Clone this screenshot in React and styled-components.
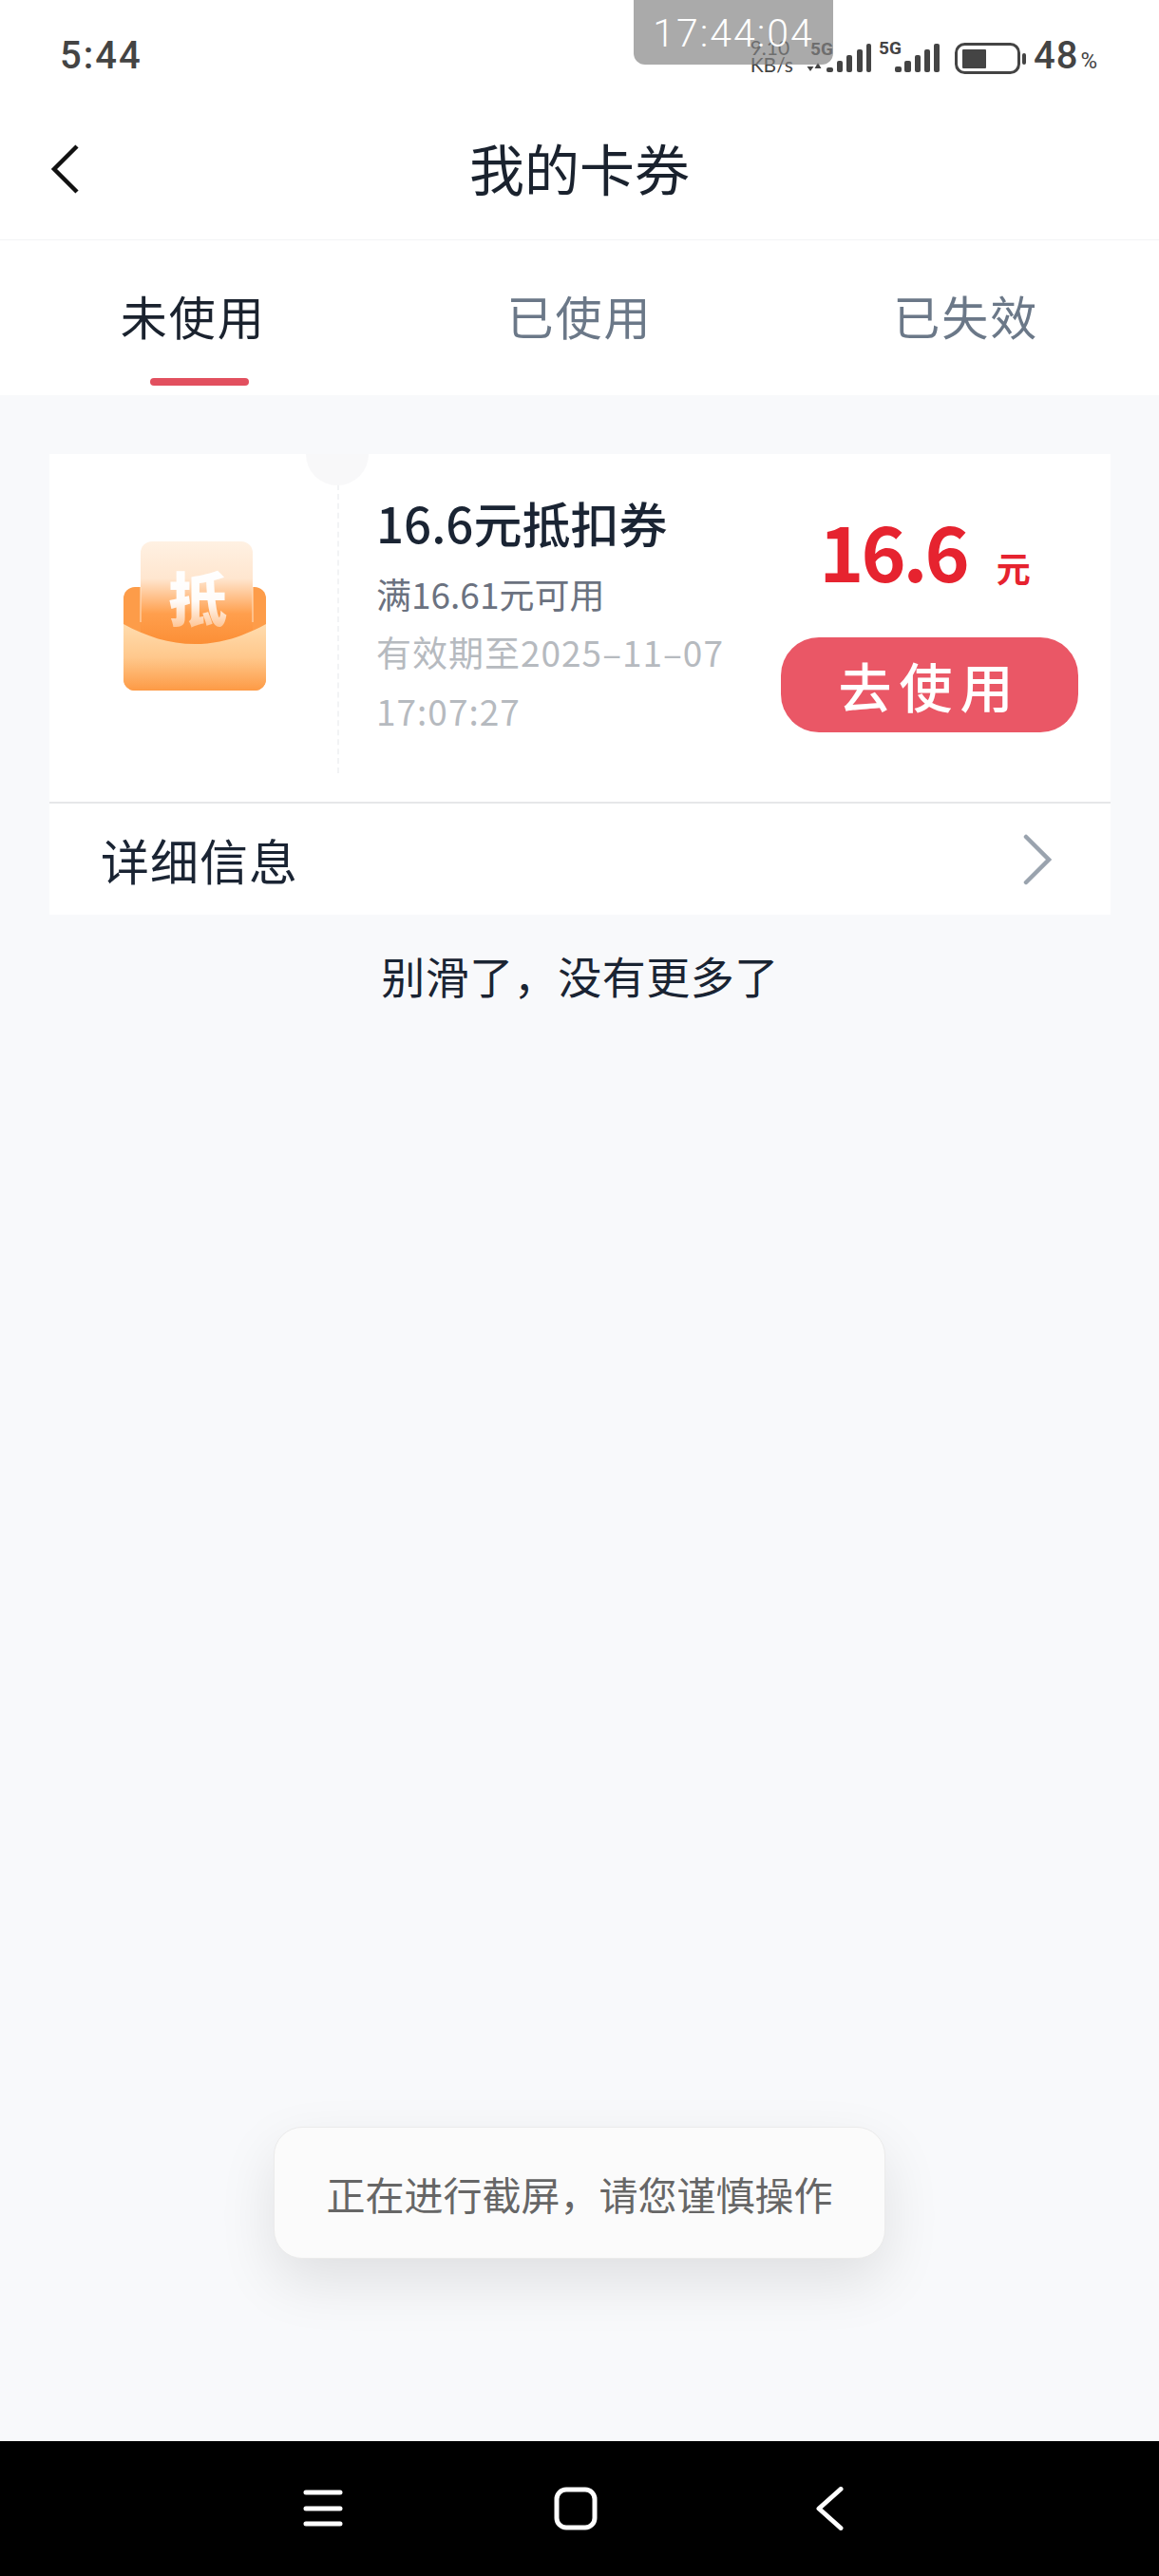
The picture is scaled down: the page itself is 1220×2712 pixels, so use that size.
import styled, { createGlobalStyle } from "styled-components";

const cjk = `"Noto Sans CJK SC", "Noto Sans", sans-serif`;

function SignalOne() {
  return (
    <svg width="68" height="38" viewBox="0 0 68 38" fill="#444">
      <SignalText x="4" y="17">5G</SignalText>
      <path d="M4 26v6M0.5 29l3.5 5 3.5-5zM12 35v-7M8.5 31l3.5-6 3.5 6z" />
      <rect x="21" y="30" width="7" height="5" rx="2" />
      <rect x="32" y="23" width="6" height="12" rx="2" />
      <rect x="42" y="17" width="6" height="18" rx="2" />
      <rect x="53" y="11" width="6" height="24" rx="2" />
      <rect x="63" y="5" width="5" height="30" rx="2" />
    </svg>
  );
}

function SignalTwo() {
  return (
    <svg width="65" height="38" viewBox="0 0 65 38" fill="#444">
      <SignalText x="0" y="16">5G</SignalText>
      <rect x="17" y="29" width="7" height="6" rx="2" />
      <rect x="27" y="23" width="7" height="12" rx="2" />
      <rect x="38" y="17" width="6" height="18" rx="2" />
      <rect x="48" y="11" width="6" height="24" rx="2" />
      <rect x="58" y="5" width="6" height="30" rx="2" />
    </svg>
  );
}

function BatteryIcon() {
  return (
    <svg width="75" height="34" viewBox="0 0 75 34" fill="none">
      <rect x="1.5" y="1.5" width="66" height="30" rx="9" stroke="#444" strokeWidth="3" />
      <rect x="8" y="7" width="25" height="20" rx="1" fill="#444" />
      <rect x="71" y="11" width="4" height="12" rx="2" fill="#444" />
    </svg>
  );
}

function CouponIcon() {
  return (
    <svg width="150" height="157" viewBox="0 0 150 157">
      <defs>
        <linearGradient id="paperFill" x1="0" y1="0" x2="0" y2="1">
          <stop offset="0" stopColor="#fff1e3" />
          <stop offset="0.35" stopColor="#ffe6cf" />
          <stop offset="0.68" stopColor="#ff9f4d" />
          <stop offset="1" stopColor="#fb8d33" />
        </linearGradient>
        <linearGradient id="frontFill" x1="0" y1="0" x2="0" y2="1">
          <stop offset="0" stopColor="#ffdcae" />
          <stop offset="0.5" stopColor="#ffc88c" />
          <stop offset="1" stopColor="#fd9a45" />
        </linearGradient>
        <linearGradient id="glyphFill" x1="0" y1="0" x2="0" y2="1">
          <stop offset="0" stopColor="#ffffff" />
          <stop offset="0.55" stopColor="#ffffff" stopOpacity="0.95" />
          <stop offset="1" stopColor="#ffffff" stopOpacity="0.2" />
        </linearGradient>
      </defs>
      <rect x="0" y="48" width="150" height="109" rx="12" fill="#fd9c49" />
      <rect x="18" y="0" width="118" height="112" rx="12" fill="url(#paperFill)" />
      <path d="M18 48V85M136 48V85" stroke="#ffe3c8" strokeWidth="1" />
      <IconGlyph x="78" y="85" fill="url(#glyphFill)">抵</IconGlyph>
      <path
        d="M0 87C24 100 48 108 75 108S126 100 150 87V145A12 12 0 0 1 138 157H12A12 12 0 0 1 0 145Z"
        fill="url(#frontFill)"
      />
    </svg>
  );
}

export default function App() {
  return (
    <Page>
      <GlobalStyle />
      <StatusBar>
        <Clock>5:44</Clock>
        <StatusIcons>
          <NetSpeed>
            <span>9.10</span>
            <span>KB/s</span>
          </NetSpeed>
          <SignalOne />
          <SignalTwo />
          <BatteryWrap>
            <BatteryIcon />
          </BatteryWrap>
          <BatteryLevel>
            48<small>%</small>
          </BatteryLevel>
        </StatusIcons>
        <RecordPill>17:44:04</RecordPill>
      </StatusBar>

      <Header>
        <BackButton>
          <svg width="32" height="52" viewBox="0 0 32 52" fill="none">
            <path d="M28 2L4 26l24 24" stroke="#111" strokeWidth="4.5" />
          </svg>
        </BackButton>
        <Title>我的卡券</Title>
      </Header>

      <Tabs>
        <Tab>
          <TabLabel $active>未使用</TabLabel>
          <TabLine />
        </Tab>
        <Tab>
          <TabLabel>已使用</TabLabel>
        </Tab>
        <Tab>
          <TabLabel>已失效</TabLabel>
        </Tab>
      </Tabs>

      <Content>
        <Card>
          <CardMain>
            <Notch />
            <IconCell>
              <CouponIcon />
            </IconCell>
            <DashedLine />
            <Info>
              <CouponName>16.6元抵扣券</CouponName>
              <Condition>满16.61元可用</Condition>
              <Expiry>有效期至2025–11–07 17:07:27</Expiry>
            </Info>
            <Action>
              <Price>
                16.6<Unit>元</Unit>
              </Price>
              <UseButton>去使用</UseButton>
            </Action>
          </CardMain>
          <DetailRow>
            <DetailText>详细信息</DetailText>
            <svg width="30" height="54" viewBox="0 0 30 54" fill="none">
              <path
                d="M3 3l24 24L3 51"
                stroke="#9aa3ae"
                strokeWidth="4.5"
                strokeLinecap="round"
              />
            </svg>
          </DetailRow>
        </Card>
        <EndNote>别滑了，没有更多了</EndNote>
        <Toast>正在进行截屏，请您谨慎操作</Toast>
      </Content>

      <NavBar>
        <svg width="44" height="44" viewBox="0 0 44 44" fill="none" stroke="#fff" strokeWidth="5" strokeLinecap="round">
          <path d="M4 5h36M4 22h36M4 38h36" />
        </svg>
        <svg width="46" height="46" viewBox="0 0 46 46" fill="none">
          <rect x="3" y="3" width="40" height="40" rx="10" stroke="#fff" strokeWidth="5" />
        </svg>
        <svg width="40" height="46" viewBox="0 0 40 46" fill="none">
          <path
            d="M35 2.5L12 23l23 20.5"
            stroke="#fff"
            strokeWidth="5"
            strokeLinecap="round"
            strokeLinejoin="round"
          />
        </svg>
      </NavBar>
    </Page>
  );
}

const GlobalStyle = createGlobalStyle`
  html, body {
    margin: 0;
    padding: 0;
    background: #f8f9fb;
  }
`;

const Page = styled.div`
  display: flex;
  flex-direction: column;
  width: 1220px;
  height: 2712px;
  overflow: hidden;
  font-family: ${cjk};
  background: #f8f9fb;
`;

const StatusBar = styled.div`
  position: relative;
  display: flex;
  align-items: flex-end;
  justify-content: space-between;
  height: 100px;
  padding: 0 64px 21px 63px;
  box-sizing: border-box;
  background: #fff;
  color: #444;
`;

const Clock = styled.div`
  font-family: Roboto, sans-serif;
  font-size: 40px;
  font-weight: 500;
  line-height: 40px;
  letter-spacing: 2px;
`;

const StatusIcons = styled.div`
  display: flex;
  align-items: flex-end;
  gap: 8px;
`;

const NetSpeed = styled.div`
  display: flex;
  flex-direction: column;
  align-items: flex-start;
  margin: 0 6px 2px 0;
  font-family: Lato, sans-serif;
  font-size: 21px;
  line-height: 18px;
  color: #444;
`;

const SignalText = styled.text`
  font-family: Roboto, sans-serif;
  font-size: 19px;
  font-weight: 700;
`;

const BatteryWrap = styled.div`
  display: flex;
  margin: 0 0 0 7px;
`;

const BatteryLevel = styled.div`
  font-family: Roboto, sans-serif;
  font-size: 40px;
  font-weight: 500;
  line-height: 30px;
  letter-spacing: 1px;

  small {
    margin-left: 2px;
    font-size: 24px;
    font-weight: 400;
  }
`;

const RecordPill = styled.div`
  position: absolute;
  top: 0;
  left: 667px;
  width: 210px;
  height: 68px;
  padding-top: 14px;
  box-sizing: border-box;
  border-radius: 0 0 12px 12px;
  background: rgba(130, 130, 130, 0.68);
  color: #fff;
  font-family: Roboto, sans-serif;
  font-size: 41px;
  font-weight: 300;
  line-height: 42px;
  letter-spacing: 2px;
  text-align: center;
`;

const Header = styled.div`
  position: relative;
  display: flex;
  align-items: center;
  justify-content: center;
  height: 152px;
  background: #fff;
  border-bottom: 1px solid #f3f4f6;
`;

const BackButton = styled.div`
  position: absolute;
  left: 53px;
  top: 52px;
  display: flex;
`;

const Title = styled.div`
  font-size: 58px;
  font-weight: 400;
  line-height: 70px;
  color: #1a222e;
`;

const Tabs = styled.div`
  display: flex;
  height: 163px;
  background: #fff;
`;

const Tab = styled.div`
  flex: 1;
  display: flex;
  flex-direction: column;
  align-items: center;
  padding-top: 49px;
`;

const TabLabel = styled.div`
  font-size: 49px;
  line-height: 60px;
  letter-spacing: 2px;
  color: ${(props) => (props.$active ? "#1a222e" : "#6b7888")};
`;

const TabLine = styled.div`
  width: 104px;
  height: 8px;
  margin: 36px 0 0 14px;
  border-radius: 4px;
  background: #e2505f;
`;

const Content = styled.div`
  position: relative;
  flex: 1;
  padding: 62px 51px 0 52px;
  background: #f8f9fb;
`;

const Card = styled.div`
  background: #fff;
`;

const CardMain = styled.div`
  position: relative;
  display: flex;
  height: 368px;
  border-bottom: 2px solid #e6e7e9;
  box-sizing: border-box;
`;

const Notch = styled.div`
  position: absolute;
  top: 0;
  left: 270px;
  width: 66px;
  height: 33px;
  border-radius: 0 0 33px 33px;
  background: #f8f8f9;
`;

const IconCell = styled.div`
  display: flex;
  justify-content: center;
  width: 303px;
  padding: 92px 0 0 2px;
  box-sizing: border-box;
`;

const DashedLine = styled.div`
  width: 0;
  margin: 32px 0 30px;
  border-left: 2px dashed #f2f3f5;
`;

const Info = styled.div`
  flex: none;
  width: 386px;
  padding: 37px 40px 0 39px;
`;

const CouponName = styled.div`
  font-size: 51px;
  font-weight: 500;
  line-height: 70px;
  color: #1a2433;
  white-space: nowrap;
`;

const Condition = styled.div`
  margin-top: 10px;
  font-size: 37px;
  line-height: 60px;
  color: #6b7280;
  white-space: nowrap;
`;

const Expiry = styled.div`
  font-size: 37px;
  line-height: 62px;
  letter-spacing: 1px;
  color: #b6babf;
`;

const Action = styled.div`
  display: flex;
  flex-direction: column;
  align-items: center;
  width: 313px;
  padding-top: 50px;
`;

const Price = styled.div`
  display: flex;
  align-items: baseline;
  height: 143px;
  margin-right: 10px;
  font-size: 80px;
  font-weight: 600;
  letter-spacing: -3px;
  line-height: 100px;
  color: #e6232f;
`;

const Unit = styled.span`
  margin-left: 31px;
  font-size: 36px;
  font-weight: 600;
  letter-spacing: 0;
  line-height: 36px;
`;

const UseButton = styled.div`
  display: flex;
  align-items: center;
  justify-content: center;
  width: 313px;
  height: 100px;
  border-radius: 40px;
  background: #ea5766;
  color: #fff;
  font-size: 56px;
  font-weight: 500;
  letter-spacing: 8px;
  line-height: 100px;
`;

const DetailRow = styled.div`
  display: flex;
  align-items: center;
  justify-content: space-between;
  height: 117px;
  padding: 0 62px 0 54px;
`;

const DetailText = styled.div`
  font-size: 51px;
  letter-spacing: 1px;
  line-height: 60px;
  color: #1a2433;
`;

const EndNote = styled.div`
  margin-top: 33px;
  font-size: 46px;
  letter-spacing: 0.5px;
  line-height: 60px;
  text-align: center;
  color: #1a2433;
`;

const Toast = styled.div`
  position: absolute;
  left: 288px;
  top: 1823px;
  display: flex;
  align-items: center;
  justify-content: center;
  width: 644px;
  height: 139px;
  box-sizing: border-box;
  border: 1px solid #ebebeb;
  border-radius: 30px;
  background: #fbfbfb;
  box-shadow: 0 24px 60px rgba(0, 0, 0, 0.1);
  color: #666;
  font-size: 41px;
`;

const NavBar = styled.div`
  display: flex;
  align-items: center;
  gap: 221px;
  height: 142px;
  padding-left: 318px;
  background: #000;
`;

const IconGlyph = styled.text`
  font-family: ${cjk};
  font-size: 62px;
  font-weight: 900;
  text-anchor: middle;
`;
